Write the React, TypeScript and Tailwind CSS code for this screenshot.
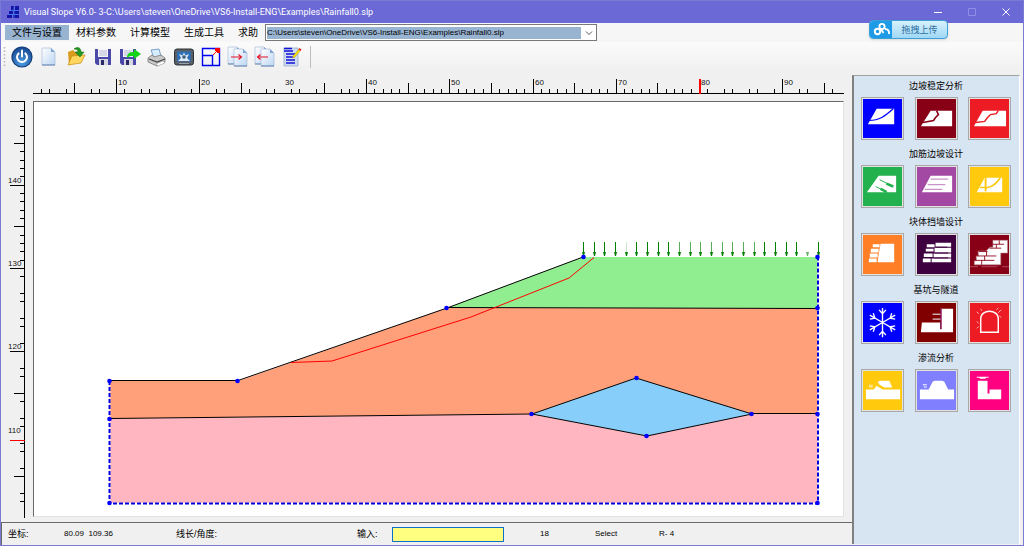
import React from "react";

const MENUS = ["文件与设置", "材料参数", "计算模型", "生成工具", "求助"];
const FILE_PATH = "C:\\Users\\steven\\OneDrive\\VS6-Install-ENG\\Examples\\Rainfall0.slp";

/* ---------- toolbar icons ---------- */

const Sheet = ({ x = 0, y = 0 }: { x?: number; y?: number }) => (
  <g transform={`translate(${x} ${y})`}>
    <path d="M0 0h9l4 4v13H0z" fill="url(#sheetFill)" stroke="#9db3d2" strokeWidth="0.6" />
    <path d="M9 0v4h4z" fill="#7fa6d6" />
    <path d="M0 17h13" stroke="#4a6ea6" strokeWidth="0.8" />
  </g>
);

const Disk = () => (
  <g>
    <path d="M2 3h16v16H4l-2-2z" fill="#4a48a8" />
    <path d="M5 3h10v8H5z" fill="#f4f5fb" />
    <path d="M6 5h8M6 7h8M6 9h8" stroke="#a9abc8" strokeWidth="0.8" />
    <path d="M6 13h9v6H6z" fill="#d5d7e2" />
    <path d="M8 14h3v5H8z" fill="#2b2a66" />
  </g>
);

const TOOLS: { label: string; art: React.ReactNode }[] = [
  {
    label: "退出",
    art: (
      <g>
        <circle cx="11" cy="11" r="10.6" fill="#153f7c" />
        <circle cx="11" cy="11" r="9.4" fill="url(#powerFill)" />
        <path d="M7.6 7.4a5 5 0 1 0 6.8 0" fill="none" stroke="#fff" strokeWidth="2" strokeLinecap="round" />
        <path d="M11 4.5v6" stroke="#fff" strokeWidth="2" strokeLinecap="round" />
      </g>
    ),
  },
  { label: "新建", art: <Sheet x={4} y={2} /> },
  {
    label: "打开",
    art: (
      <g>
        <path d="M3 6l5-2 2 2 6-1v5L7 18l-3 1z" fill="#d99b1c" />
        <path d="M3 19l4-9 13-1-4 8z" fill="#ffd75e" stroke="#c88b12" strokeWidth="0.7" />
        <path d="M9 3c4-3 7-1 7 3h3l-4 5-5-5h3c0-2-1-3-4-3z" fill="#239a23" stroke="#0c650c" strokeWidth="0.5" />
      </g>
    ),
  },
  { label: "保存", art: <g transform="translate(1 0)"><Disk /></g> },
  {
    label: "另存为",
    art: (
      <g>
        <g transform="translate(-1 0)"><Disk /></g>
        <path d="M8 12c0-5 3-6 7-6V3l7 5-7 5v-3c-3 0-5 0-7 2z" fill="#14d414" />
      </g>
    ),
  },
  {
    label: "打印",
    art: (
      <g>
        <path d="M5 4l8-1 2 7-7 2z" fill="#d6ecff" stroke="#4d7fae" strokeWidth="0.7" />
        <path d="M2 12l4-3 2 2 7-2 4 3v4l-8 4-9-4z" fill="#c9c9c9" stroke="#777" strokeWidth="0.8" />
        <path d="M3 13l8 3 8-3" fill="none" stroke="#444" strokeWidth="1.2" />
        <path d="M10 18l7-3 2 2-7 3z" fill="#fff" stroke="#888" strokeWidth="0.5" />
      </g>
    ),
  },
  {
    label: "截图",
    art: (
      <g>
        <rect x="1.5" y="3" width="19" height="16" rx="2.5" fill="#5a6068" stroke="#2c3035" />
        <rect x="4" y="5.5" width="14" height="10" fill="#2f6fb4" />
        <path d="M5 15l3-3-2-4 3.500 1.500L11 6.500l1.500 3L16 8l-2 4 3 3z" fill="#dfe9f5" />
        <circle cx="11" cy="11" r="1.800" fill="#3e5d80" />
        <path d="M6 17.500h10" stroke="#9aa0a8" />
      </g>
    ),
  },
  {
    label: "缩放窗口",
    art: (
      <g fill="none" stroke="#0000ee">
        <path d="M2.5 2.5h17v17h-17z" strokeWidth="1.4" />
        <path d="M2.5 9.5h10v10" strokeWidth="1.4" />
        <path d="M13 9l4-4" stroke="#ff0000" />
        <path d="M15 2h5v5h-3V5h-2z" fill="#ff0000" stroke="none" />
      </g>
    ),
  },
  {
    label: "导入",
    art: (
      <g>
        <Sheet x={1} y={1} />
        <Sheet x={7} y={3} />
        <path d="M4 11h10M11.500 8.500l3 2.500-3 2.500" fill="none" stroke="#e81123" strokeWidth="1.100" />
      </g>
    ),
  },
  {
    label: "导出",
    art: (
      <g>
        <Sheet x={1} y={1} />
        <Sheet x={7} y={3} />
        <path d="M14 11H4M6.500 8.500L3.500 11l3 2.500" fill="none" stroke="#e81123" strokeWidth="1.100" />
      </g>
    ),
  },
  {
    label: "报告",
    art: (
      <g>
        <path d="M3 2h14v18H3z" fill="#cfdcef" stroke="#8ca5ca" strokeWidth="0.7" />
        <path d="M3 5h9M5 8h9M5 11h8M5 14h9M5 17h9M3 2.500h8" stroke="#1212d8" strokeWidth="1.300" />
        <path d="M12 10l6-7 1.500 1.500-6 7-2 .5z" fill="#ffe000" stroke="#777733" strokeWidth="0.4" />
        <path d="M17.500 3.500l1-1.500 2 1.500-1 1.500z" fill="#ee2020" />
      </g>
    ),
  },
];

/* ---------- module tiles ---------- */

const FLAKE_ANGLES = [0, 60, 120, 180, 240, 300];

const SECTIONS: { title: string; tiles: { label: string; color: string; art: React.ReactNode }[] }[] = [
  {
    title: "边坡稳定分析",
    tiles: [
      {
        label: "圆弧滑面",
        color: "bg-[#0000ff]",
        art: (
          <g>
            <path d="M5 26l9-16h18v16z" fill="#fff" />
            <path d="M6 22c11 0 16-4 25-12" fill="none" stroke="#0000ff" strokeWidth="1.300" />
          </g>
        ),
      },
      {
        label: "折线滑面",
        color: "bg-[#880015]",
        art: (
          <g>
            <path d="M4 28l10-16h22v16z" fill="#fff" />
            <path d="M6 24l11-2 2-3 3-3-2-4" fill="none" stroke="#880015" strokeWidth="1.600" />
          </g>
        ),
      },
      {
        label: "任意滑面",
        color: "bg-[#ed1c24]",
        art: (
          <g>
            <path d="M4 28l9-16h24v16z" fill="#fff" />
            <path d="M6 24l9-1 3-4 3-3 6-1 2-3" fill="none" stroke="#ed1c24" strokeWidth="1.500" />
          </g>
        ),
      },
    ],
  },
  {
    title: "加筋边坡设计",
    tiles: [
      {
        label: "土钉",
        color: "bg-[#22b14c]",
        art: (
          <g>
            <path d="M4 26L16 9h18v17z" fill="#fff" />
            <path d="M17 13l14 7M13 20l12 6" stroke="#22b14c" strokeWidth="1" />
            <path d="M24 17l7 3M18 22.500l6 3" stroke="#22b14c" strokeWidth="2.600" />
          </g>
        ),
      },
      {
        label: "加筋土",
        color: "bg-[#a349a4]",
        art: (
          <g>
            <path d="M5 26l9-17h22v17z" fill="#fff" />
            <path d="M14 12.500h18M11 18h18M8 23h18" stroke="#c992ca" strokeWidth="1.200" />
          </g>
        ),
      },
      {
        label: "抗滑桩",
        color: "bg-[#ffc90e]",
        art: (
          <g>
            <path d="M7 26l8-15h18v15z" fill="#fff" />
            <path d="M10 21h8c6-1 9-4 13-10" fill="none" stroke="#ffc90e" strokeWidth="1.600" />
            <path d="M16 11v14" stroke="#ffc90e" strokeWidth="2" />
          </g>
        ),
      },
    ],
  },
  {
    title: "块体挡墙设计",
    tiles: [
      {
        label: "重力墙",
        color: "bg-[#ff7f27]",
        art: (
          <g fill="#fff">
            <path d="M10 9.500h7v3h-7zM8 14h8v4H8zM7 19h8v4H7zM6 24h8v4H6z" />
            <path d="M18 9h14v19H15l1-8z" />
          </g>
        ),
      },
      {
        label: "加筋挡墙",
        color: "bg-[#3f0040]",
        art: (
          <g fill="#fff">
            <path d="M10 9.500h8v3h-8zM9 14h8v3H9zM7 19h9v3.500H7zM6 24h8v4H6z" />
            <path d="M19 8h16v4H19zM18 13h17v5H18zM17 19h18v4H17zM15 24h20v4H15z" />
            <path d="M19 12.500h12M18 18.500h14M17 23.500h15" stroke="#3f0040" strokeWidth="1" />
          </g>
        ),
      },
      {
        label: "多级挡墙",
        color: "bg-[#880015]",
        art: (
          <g>
            <path
              d="M23.500 5.500h15v13h-7v12h-27v-4h2v-5h2v-5h8l4-4h3z"
              fill="#fff"
              stroke="#b98a90"
              strokeWidth="0.600"
            />
            <path d="M21 9.500h14M20 13.500h12M9 17h9M7 21.500h20M5 26h20M30 5.500v4M27 9.500v4M17 17v4.500M15 21.500v4.500M12 26v4.500" stroke="#880015" strokeWidth="0.900" />
            <path d="M0 32.500h8M12 32.500h16M33 32.500h7" stroke="#c06a78" strokeWidth="0.700" />
          </g>
        ),
      },
    ],
  },
  {
    title: "基坑与隧道",
    tiles: [
      {
        label: "冻结法",
        color: "bg-[#0000ff]",
        art: (
          <g stroke="#fff" strokeWidth="1.400" fill="none">
            {FLAKE_ANGLES.map((a) => (
              <path key={a} d="M20 20V5M16.500 7l3.500 4 3.500-4" transform={`rotate(${a} 20 20)`} />
            ))}
          </g>
        ),
      },
      {
        label: "基坑支护",
        color: "bg-[#800000]",
        art: (
          <g>
            <path d="M5 20h19V6h13v24H4z" fill="#fff" />
            <path d="M24.500 6v21" stroke="#800040" strokeWidth="1.600" />
            <path d="M16 11.500h8M16 16.500h8" stroke="#fff" strokeWidth="1" />
          </g>
        ),
      },
      {
        label: "隧道",
        color: "bg-[#ed1c24]",
        art: (
          <g fill="none" stroke="#fff">
            <path d="M11 30V16c0-10 18-10 18 0v14z" strokeWidth="1.500" />
            <path d="M9 11l-2-2M12 8l-1-2M29 10l3-3M27 7l2-2M9 21l-2-2M9 24l-2 2M30 13l2 2" strokeWidth="0.700" />
          </g>
        ),
      },
    ],
  },
  {
    title: "渗流分析",
    tiles: [
      {
        label: "边坡渗流",
        color: "bg-[#ffc90e]",
        art: (
          <g fill="#fff">
            <path d="M3 19h8l3-4 6 4h18v10H3z" />
            <path d="M15 11l3-1h9l3 7h-8l-5-3z" />
            <path d="M6 14h4v3H6z" opacity="0.500" />
          </g>
        ),
      },
      {
        label: "堤坝渗流",
        color: "bg-[#8080ff]",
        art: (
          <g fill="#fff">
            <path d="M3 19h9l4-8 2-1h8l2 1 4 8h6v10H3z" />
            <path d="M6 13.500h4v1H6zM7 16h3v1H7z" />
          </g>
        ),
      },
      {
        label: "基坑渗流",
        color: "bg-[#ff0080]",
        art: (
          <g fill="#fff">
            <path d="M8 10h10v13h2v-4h12v10H8z" />
            <path d="M7 6h12v1H7zM10 7h6v1h-6z" />
          </g>
        ),
      },
    ],
  },
];

/* ---------- rulers ---------- */

const range = (a: number, b: number) => Array.from({ length: b - a + 1 }, (_, i) => a + i);

const H_TICKS = [
  1, 2, 4, 5, 7, 8, 10, 11, 13, 14, 16, 17, 19, 20, 22, 23, 25, 26, 28, 29, 31, 32, 34, 35,
  ...range(37, 81), 83, 84, 86, 87, 89, 90, 92, 93, 95, 96,
];
const V_TICKS = [
  ...range(129, 150), 127, 126, 124, 123, 121, 120, 118, 117, 115, 114, 112, 111, 109, 108, 106, 105, 103, 102,
];
const hx = (v: number) => Math.floor(33.2 + v * 8.33);
const vy = (v: number) => Math.floor(185.2 + (140 - v) * 8.33);

function HorizontalRuler() {
  return (
    <svg viewBox="33 71 811 30" className="block w-full" shapeRendering="crispEdges" aria-label="水平标尺">
      <path d="M33 93.500h811" stroke="#000" />
      {H_TICKS.map((v) => {
        const len = v % 10 === 0 ? 14 : v % 5 === 0 ? 10 : 4;
        return <path key={v} d={`M${hx(v) + 0.5} ${93 - len}v${len}`} stroke="#000" />;
      })}
      <path d="M700 79v15" stroke="#f00" strokeWidth="2" />
      {range(1, 9).map((n) => (
        <text key={n} x={hx(n * 10) + 2} y="85" fontSize="8" fill="#111">
          {n * 10}
        </text>
      ))}
    </svg>
  );
}

function VerticalRuler() {
  return (
    <svg viewBox="1 101 32 417" className="block w-full" shapeRendering="crispEdges" aria-label="垂直标尺">
      <path d="M24.500 101v417" stroke="#000" />
      {V_TICKS.map((v) => {
        const len = v % 10 === 0 ? 14 : v % 5 === 0 ? 10 : 4;
        return <path key={v} d={`M${24 - len} ${vy(v) + 0.5}h${len}`} stroke="#000" />;
      })}
      <path d="M10 440.500h15" stroke="#f00" />
      {[140, 130, 120, 110].map((v) => (
        <text key={v} x="8" y={vy(v) - 2} fontSize="8" fill="#111">
          {v}
        </text>
      ))}
    </svg>
  );
}

/* ---------- slope model ---------- */

const NODES = [
  [109, 381], [237, 381], [446, 308], [583, 257], [817, 257], [817, 308], [817, 414],
  [109, 419], [109, 503], [817, 503], [531, 414], [636, 378], [751, 414], [646, 436],
];

function SlopeModel() {
  return (
    <svg viewBox="34 102 809 414" className="block w-full" role="img" aria-label="边坡模型">
      <path d="M447 308L583 257H818V308z" fill="#90ee90" />
      <path d="M109 381H238L447 308H818V414H752L636 378 532 414 109 419z" fill="#ffa07a" />
      <path d="M109 419L532 414 647 436 752 414H818V503H109z" fill="#ffb6c1" />
      <path d="M532 414L636 378 752 414 647 436z" fill="#87cefa" stroke="#000" />
      <g fill="none" stroke="#000">
        <path d="M109 380.500H238L447 308 583 257" />
        <path d="M447 307.500L818 308.500" />
        <path d="M109 418.500L532 414" />
        <path d="M752 413.500H818" />
      </g>
      <path d="M291 362.500L332 361 471 317 569 278 594 257.500" fill="none" stroke="#f00" />
      <path d="M109.500 381V503.500H818V257" fill="none" stroke="#fff" strokeOpacity="0.600" strokeWidth="2" />
      <path d="M109.500 381V503.500H818V257" fill="none" stroke="#0000dd" strokeWidth="2" strokeDasharray="4 2" />
      {range(0, 22).map((i) => {
        const x = Math.round(583 + i * 10.66);
        return (
          <g key={i}>
            {i !== 21 && (
              <path d={`M${x + 0.5} 242v13`} stroke="#008000" strokeOpacity={i === 4 ? 0.2 : i > 8 && i < 17 ? 0.65 : 1} />
            )}
            <path d={`M${x - 1} 252h3l-1 4h-1z`} fill="#008000" fillOpacity={i === 21 ? 0.6 : 1} />
          </g>
        );
      })}
      {NODES.map(([x, y]) => (
        <circle key={`${x}-${y}`} cx={x + 0.5} cy={y} r="2.300" fill="#0000ff" />
      ))}
    </svg>
  );
}

/* ---------- window ---------- */

export default function App() {
  return (
    <div className="flex min-h-screen flex-col border border-[#7b79d3] bg-[#f0f0f0] font-['Liberation_Sans','Noto_Sans_CJK_SC',sans-serif] text-[9px] leading-3 text-black">
      <svg width="0" height="0" className="absolute" aria-hidden="true">
        <defs>
          <linearGradient id="sheetFill" x1="0" y1="0" x2="1" y2="1">
            <stop offset="0" stopColor="#ffffff" />
            <stop offset="1" stopColor="#bcd6f3" />
          </linearGradient>
          <radialGradient id="powerFill" cx="0.5" cy="0.8" r="0.8">
            <stop offset="0" stopColor="#4d9be0" />
            <stop offset="1" stopColor="#174a94" />
          </radialGradient>
        </defs>
      </svg>

      <header className="flex h-[22px] items-center bg-[#6b69d6] pl-1.5 text-white">
        <svg viewBox="0 0 13 13" className="mr-1 size-[13px]" aria-hidden="true">
          <path d="M4 0h3v4H4zM8 0h4v4H8zM2 5h4v3H2zM7 5h5v3H7zM0 9h5v3H0zM6 9h6v3H6z" fill="#1414a8" />
          <path d="M7 1v11M3 4.500h9M1 8.500h11" stroke="#3d78e8" strokeWidth="0.800" />
        </svg>
        <h1 className="min-w-0 flex-1 truncate font-[Roboto,'Noto_Sans',sans-serif] text-[9px] leading-3">
          Visual Slope V6.0- 3-{FILE_PATH}
        </h1>
        <div className="flex items-center">
          <button aria-label="最小化" className="flex h-[22px] w-[34px] items-center justify-center">
            <svg viewBox="0 0 8 8" className="size-2"><path d="M0 4.500h8" stroke="#fff" /></svg>
          </button>
          <button aria-label="最大化" disabled className="flex h-[22px] w-[34px] items-center justify-center">
            <svg viewBox="0 0 8 8" className="size-2"><path d="M.5.5h7v7h-7z" fill="none" stroke="#8f8de6" /></svg>
          </button>
          <button aria-label="关闭" className="flex h-[22px] w-[34px] items-center justify-center">
            <svg viewBox="0 0 8 8" className="size-2"><path d="M.5.5l7 7M7.500.5l-7 7" stroke="#fff" /></svg>
          </button>
        </div>
      </header>

      <div className="relative">
        <div className="flex h-[19px] items-center bg-[#f6f6f6] pl-1">
          <nav className="flex items-center" aria-label="主菜单">
            {MENUS.map((m, i) => (
              <button
                key={m}
                className={`h-[15px] px-[7px] text-[10px] leading-[15px] whitespace-nowrap ${i === 0 ? "bg-[#99b4d1]" : ""}`}
              >
                {m}
              </button>
            ))}
          </nav>
          <div className="flex h-[17px] w-[332px] items-center border border-[#7a7a7a] bg-white p-px">
            <select
              aria-label="文件路径"
              className="h-[12px] min-w-0 flex-1 appearance-none truncate bg-[#99b4d1] text-[8px] leading-3 outline-none"
            >
              <option>{FILE_PATH}</option>
            </select>
            <svg viewBox="0 0 14 12" className="pointer-events-none h-3 w-[14px]" aria-hidden="true">
              <path d="M5 4.500l3 3 3-3" fill="none" stroke="#555" />
            </svg>
          </div>
        </div>

        <div className="flex h-[29px] items-center bg-linear-to-b from-[#fbfbfb] to-[#f0f0f0] pl-0.5" role="toolbar" aria-label="工具栏">
          <svg viewBox="0 0 3 20" className="mr-[5px] h-5 w-[3px]" aria-hidden="true">
            <path d="M1.500 0v20" stroke="#b5b5b5" strokeWidth="1.500" strokeDasharray="1.500 2" />
          </svg>
          <div className="flex gap-[5px]">
            {TOOLS.map((t) => (
              <button key={t.label} aria-label={t.label} className="size-[22px]">
                <svg viewBox="0 0 22 22" className="block size-[22px]">{t.art}</svg>
              </button>
            ))}
          </div>
          <div className="ml-[7px] h-[22px] w-px bg-[#bdbdbd]" />
        </div>

        <button className="absolute -top-[3px] right-[75px] flex h-[19px] w-[79px] items-center overflow-hidden rounded-sm border border-[#3c9fd8] bg-linear-to-b from-[#d8f1fc] to-[#9fd8f5] text-[#2f6f9f] shadow-sm">
          <svg viewBox="0 0 22 17" className="h-[17px] w-[22px] shrink-0" aria-hidden="true">
            <path d="M0 0h22v17H0z" fill="#1e9be6" />
            <g fill="none" stroke="#fff" strokeWidth="1.900">
              <circle cx="7.500" cy="10.500" r="2.700" />
              <circle cx="12" cy="5.500" r="2.600" />
              <path d="M10.500 7.500l3 4.500M15 8c3 0 4.500 2 4 5" />
            </g>
          </svg>
          <span className="flex-1 text-center">拖拽上传</span>
        </button>
      </div>

      <div className="flex flex-1">
        <main className="flex min-w-0 flex-1 flex-col">
          <div className="flex flex-1 items-start pr-2">
            <div className="w-8 shrink-0 pt-[30px]">
              <VerticalRuler />
            </div>
            <div className="min-w-0 flex-1">
              <HorizontalRuler />
              <div className="border border-t-[#696969] border-r-[#e3e3e3] border-b-[#e3e3e3] border-l-[#696969] bg-white">
                <SlopeModel />
              </div>
            </div>
          </div>

          <footer className="grid h-[23px] grid-cols-[56px_112px_181px_35px_148px_55px_64px_1fr] items-center border-t border-l border-[#696969] pl-1.5 whitespace-nowrap">
            <span>坐标:</span>
            <output className="text-[8px] whitespace-pre">80.09  109.36</output>
            <span>线长/角度:</span>
            <label htmlFor="command">输入:</label>
            <input
              id="command"
              className="h-[15px] w-28 border border-[#0a70c8] bg-[#ffff80] px-px text-[9px] outline-none"
            />
            <output className="text-[8px]">18</output>
            <output className="text-[8px]">Select</output>
            <output className="text-[8px]">R- 4</output>
          </footer>
        </main>

        <aside className="mt-1 mr-[3px] mb-px w-[168px] shrink-0 border-t border-r border-l-2 border-t-[#a0a0a0] border-r-white border-l-[#808080] bg-[#d7e4f2] pr-2 pl-[7px]">
          {SECTIONS.map((s) => (
            <section key={s.title} className="pb-1">
              <h2 className="h-[21px] text-center leading-[21px]">{s.title}</h2>
              <div className="flex justify-between">
                {s.tiles.map((t) => (
                  <button
                    key={t.label}
                    aria-label={t.label}
                    className={`size-[43px] border border-[#a8a8a8] p-px outline-1 -outline-offset-2 outline-[#e3e3e3] ${t.color}`}
                  >
                    <svg viewBox="0 0 40 40" className="block size-full">{t.art}</svg>
                  </button>
                ))}
              </div>
            </section>
          ))}
        </aside>
      </div>
    </div>
  );
}
